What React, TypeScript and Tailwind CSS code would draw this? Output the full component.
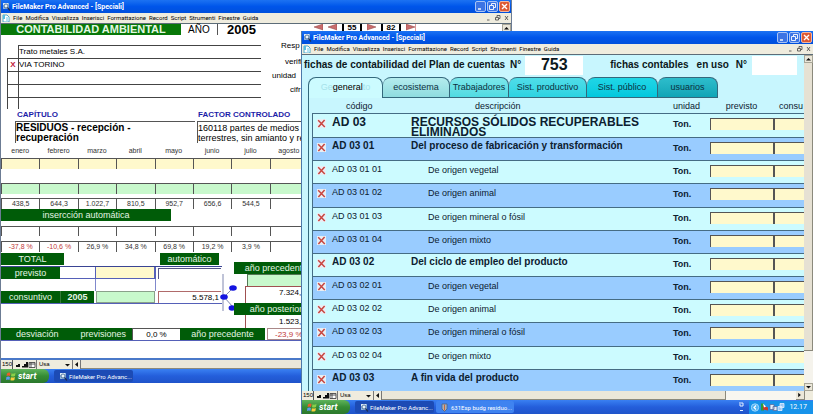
import clsx from 'clsx'

const MENU = ['File', 'Modifica', 'Visualizza', 'Inserisci', 'Formattazione', 'Record', 'Script', 'Strumenti', 'Finestre', 'Guida']

const MONTHS = [
  { name: 'enero', value: '438,5', change: '-37,8 %' },
  { name: 'febrero', value: '644,3', change: '-10,6 %' },
  { name: 'marzo', value: '1.022,7', change: '26,9 %' },
  { name: 'abril', value: '810,5', change: '34,8 %' },
  { name: 'mayo', value: '952,7', change: '69,8 %' },
  { name: 'junio', value: '656,6', change: '19,2 %' },
  { name: 'julio', value: '544,5', change: '3,9 %' },
  { name: 'agosto', value: '', change: '' },
]

type Level = 'title' | 'group' | 'item'

const ACCOUNTS: { code: string; text: string; level: Level }[] = [
  { code: 'AD 03', text: 'RECURSOS SÓLIDOS RECUPERABLES ELIMINADOS', level: 'title' },
  { code: 'AD 03 01', text: 'Del proceso de fabricación y transformación', level: 'group' },
  { code: 'AD 03 01 01', text: 'De origen vegetal', level: 'item' },
  { code: 'AD 03 01 02', text: 'De origen animal', level: 'item' },
  { code: 'AD 03 01 03', text: 'De origen mineral o fósil', level: 'item' },
  { code: 'AD 03 01 04', text: 'De origen mixto', level: 'item' },
  { code: 'AD 03 02', text: 'Del ciclo de empleo del producto', level: 'group' },
  { code: 'AD 03 02 01', text: 'De origen vegetal', level: 'item' },
  { code: 'AD 03 02 02', text: 'De origen animal', level: 'item' },
  { code: 'AD 03 02 03', text: 'De origen mineral o fósil', level: 'item' },
  { code: 'AD 03 02 04', text: 'De origen mixto', level: 'item' },
  { code: 'AD 03 03', text: 'A fin vida del producto', level: 'group' },
]

const TABS = [
  { label: 'ecosistema', className: 'w-[67px] from-[#b4ecee] to-[#8fdcdf]' },
  { label: 'Trabajadores', className: 'w-[59px] from-[#7be6ea] to-[#4fdbe2]' },
  { label: 'Sist. productivo', className: 'w-[78px] from-[#4fdde8] to-[#2bd3e2]' },
  { label: 'Sist. público', className: 'w-[71px] from-[#1fd6e6] to-[#00c8de]' },
  { label: 'usuarios', className: 'w-[60px] from-[#2dbdcc] to-[#0fa5b6]' },
]

function AppIcon() {
  return (
    <svg viewBox="0 0 9 9" className="size-[9px] shrink-0" aria-hidden="true">
      <rect x="1" y="1" width="6" height="6" fill="#8fb4dc" />
      <path d="M1 1h5v2H1z" fill="#d8e6f4" />
      <circle cx="4" cy="4" r="2" fill="#e9f2fa" stroke="#37608f" strokeWidth=".8" />
      <path d="M5.5 5.5 8 8.5" stroke="#1d2f55" strokeWidth="1.2" />
    </svg>
  )
}

function DocIcon() {
  return (
    <svg viewBox="0 0 8 8" className="size-2 shrink-0" aria-hidden="true">
      <path d="M1 1h4l2 2v5H1z" fill="#fff" stroke="#3aa0c8" strokeWidth=".9" />
      <path d="M1 1h2v4H1z" fill="#58bfe0" />
      <path d="M4 3h3v4H4z" fill="#b4e4f4" />
    </svg>
  )
}

function XMark() {
  return (
    <svg viewBox="0 0 9 9" className="size-[9px]" aria-hidden="true">
      <rect width="9" height="9" fill="#e8eef4" />
      <path d="M1.2 1.2 7.8 8M7.6 1 1.4 8" stroke="#c8453f" strokeWidth="1.5" />
    </svg>
  )
}

function TitleBar() {
  return (
    <div className="flex h-[13px] items-center bg-linear-to-b from-[#1c72f2] via-[#0055ea] to-[#0050dc] pr-px pl-px">
      <AppIcon />
      <h1 className="ml-px flex-1 font-['Roboto',sans-serif] text-[7px] leading-[12px] font-bold whitespace-nowrap text-white">
        FileMaker Pro Advanced - [Speciali]
      </h1>
      <div className="flex gap-px">
        <button aria-label="Riduci a icona" className="size-[11px] rounded-xs border border-[#a9c4f5] bg-[#3c74e4]">
          <svg viewBox="0 0 9 9" className="size-[9px]"><path d="M2 7h3" stroke="#fff" strokeWidth="1.4" /></svg>
        </button>
        <button aria-label="Ripristina" className="size-[11px] rounded-xs border border-[#a9c4f5] bg-[#3c74e4]">
          <svg viewBox="0 0 9 9" className="size-[9px]" fill="none" stroke="#fff" strokeWidth=".9"><path d="M3.5 3V1.5h4v4H6M1.5 3.5h4v4h-4z" /></svg>
        </button>
        <button aria-label="Chiudi" className="size-[11px] rounded-xs border border-[#f0b8a4] bg-[#dd5a34]">
          <svg viewBox="0 0 9 9" className="size-[9px]"><path d="M2 2l5 5M7 2 2 7" stroke="#fff" strokeWidth="1.4" /></svg>
        </button>
      </div>
    </div>
  )
}

function MenuBar() {
  return (
    <nav className="flex h-[11px] items-center border-b border-[#5c6c78] bg-[#efecde] pl-px">
      <DocIcon />
      <div className="ml-[3px] flex flex-1 gap-[3px] font-['Roboto',sans-serif] text-[6px] leading-[8px] text-black">
        {MENU.map((item) => (
          <button key={item}>{item}</button>
        ))}
      </div>
      <svg viewBox="0 0 24 8" className="mr-px h-2 w-6" fill="none" stroke="#444" strokeWidth=".8" aria-hidden="true">
        <path d="M1 6h2.500M11 3V1.500h3v3h-1M9.500 3.500h3v2.500h-3zM19 2l3 4M22 2l-3 4" />
      </svg>
    </nav>
  )
}

/** Zoom level, mode selector and horizontal scroll bar under a document. */
function StatusBar({ thumb }: { thumb: string }) {
  return (
    <div className="flex h-[9px] items-stretch bg-[#efecde] text-[6px] leading-[9px] text-black">
      <span className="w-[12px] border-r border-[#555] pl-px">150</span>
      <svg viewBox="0 0 23 9" className="w-[23px]" aria-hidden="true">
        <path d="M1 7h2V5h2V4h2v3zM9 7.500V6h2V4h2V2h2v5.500z" fill="#111" />
        <path d="M16 2.500h6v5h-6zM16 4h6M18 2.500v5" fill="#fff" stroke="#333" strokeWidth=".8" />
      </svg>
      <select aria-label="Modo" className="w-[28px] appearance-none border-l border-[#777] pl-[2px]">
        <option>Usa</option>
      </select>
      <svg viewBox="0 0 8 9" className="w-2" aria-hidden="true"><path d="M1 4h5L3.500 6.500z" fill="#111" /></svg>
      <button aria-label="Scorri a sinistra" className="w-[9px] border-x border-[#777]">
        <svg viewBox="0 0 7 9" className="h-[9px] w-[7px]"><path d="M5 2v5L2 4.500z" fill="#111" /></svg>
      </button>
      <div className="flex flex-1 bg-[#f7f6f0]">
        <div className={clsx('border-r border-b border-[#8b897c] bg-[#ebe7d9]', thumb)} />
      </div>
      <button aria-label="Scorri a destra" className="mr-[8px] w-[9px] border-r border-b border-[#8b897c] bg-[#ebe7d9]">
        <svg viewBox="0 0 7 9" className="h-[8px] w-[7px]"><path d="M2 2v5l3-2.500z" fill="#111" /></svg>
      </button>
    </div>
  )
}

function VerticalScroll() {
  return (
    <div className="flex w-[9px] flex-col bg-[#f5f3ec]">
      <button aria-label="Scorri in alto" className="h-[8px] border border-[#a8a698] bg-[#ebe7d9]">
        <svg viewBox="0 0 7 6" className="h-[6px] w-[7px]"><path d="M1 4.500h5L3.500 2z" fill="#111" /></svg>
      </button>
      <div className="flex-1">
        <div className="h-[90%] border-r border-b border-[#8b897c] bg-[#e6e1d3]" />
      </div>
      <button aria-label="Scorri in basso" className="h-[8px] border border-[#a8a698] bg-[#ebe7d9]">
        <svg viewBox="0 0 7 6" className="h-[6px] w-[7px]"><path d="M1 2h5L3.500 4.500z" fill="#111" /></svg>
      </button>
    </div>
  )
}

function StartButton() {
  return (
    <button className="flex w-[48px] items-center gap-[2px] rounded-r-md bg-linear-to-b from-[#5fb45c] via-[#358c35] to-[#2b782c] pl-[5px] text-[9px] leading-[13px] font-bold text-white italic">
      <svg viewBox="0 0 10 10" className="size-[10px]" aria-hidden="true">
        <path d="M1 2.500q2-1.500 3.500-.5L4 5Q2.500 4 .5 5z" fill="#ee5a2a" />
        <path d="M5.500 2.300Q7 3.200 9.500 2L9 5Q7 6 5 5.200z" fill="#8ad04a" />
        <path d="M.4 6Q2.400 5 3.900 6l-.4 3Q2 8 0 9z" fill="#5a9cf0" />
        <path d="M4.900 6.200Q7 7 8.900 6l-.5 3q-2 1-4 .2z" fill="#f8cc3c" />
      </svg>
      start
    </button>
  )
}

function TaskBar({ full }: { full?: boolean }) {
  return (
    <footer className="flex h-[14px] bg-linear-to-b from-[#3a80f2] via-[#245edb] to-[#1f54ca] font-['Roboto',sans-serif] text-[6px] whitespace-nowrap text-white">
      <StartButton />
      <button className="my-px ml-[5px] flex w-[79px] items-center gap-px rounded-xs bg-[#1c4bb5] pl-[5px]">
        <AppIcon />
        FileMaker Pro Advanc...
      </button>
      {full && (
        <>
          <button className="my-px ml-[2px] flex w-[78px] items-center gap-[3px] rounded-xs bg-[#3f83f0] pl-[5px]">
            <svg viewBox="0 0 7 9" className="h-[9px] w-[7px]" aria-hidden="true">
              <path d="M1 1h5v5L3.500 8.500 1 6z" fill="#a9b6c6" stroke="#4d5f7c" strokeWidth=".8" />
              <path d="M3.500 1.500v6" stroke="#c46a3c" strokeWidth="1.2" />
            </svg>
            631Esp budg residuo...
          </button>
          <div className="ml-auto flex items-center">
            <svg viewBox="0 0 8 12" className="mr-[4px] h-3 w-2" fill="none" stroke="#e4efff" strokeWidth="1" aria-hidden="true">
              <path d="M2 2h4v3H3v-2M3 9.500h3" />
            </svg>
            <div className="flex items-center gap-[4px] bg-[#1793ea] pr-[6px] pl-[2px] text-[7px]">
              <svg viewBox="0 0 34 12" className="h-[13px] w-[34px]" aria-hidden="true">
                <circle cx="4" cy="6" r="3.700" fill="#4db2f4" stroke="#b9e2ff" strokeWidth=".8" />
                <path d="M5 4 3 6l2 2" fill="none" stroke="#fff" strokeWidth="1.200" />
                <path d="M10 2h3v7h-3z" fill="#2c9c3c" />
                <path d="M12 4l5 2v3l-5-1z" fill="#c83a2c" />
                <path d="M12 2l3 3-2 1z" fill="#fff" />
                <path d="M19 3h4v5h-4zM22 5h4v4h-4z" fill="#e8eef8" stroke="#5a6ca0" strokeWidth=".8" />
                <path d="M29 2h4v4h-4zM27 5h4v4h-4z" fill="#9cc6f4" stroke="#e3f0ff" strokeWidth=".8" />
              </svg>
              <span>12.17</span>
            </div>
          </div>
        </>
      )}
    </footer>
  )
}

function MonthInputs({ kind, className }: { kind: string; className: string }) {
  return (
    <tr>
      {MONTHS.map((m) => (
        <td key={m.name} className="border-t border-l border-[#555] p-0">
          <input aria-label={`${kind} ${m.name}`} className={clsx('block h-[10px] w-full', className)} />
        </td>
      ))}
    </tr>
  )
}

function Spacer({ className }: { className: string }) {
  return (
    <tr aria-hidden="true">
      <td colSpan={8} className={clsx('p-0', className)} />
    </tr>
  )
}

const greenLabel = 'bg-[#005c08] text-center text-[9px] leading-[12px] whitespace-nowrap text-[#e4f6e4]'

function RecordNav() {
  return (
    <div className="ml-[58px] flex h-[7px] items-center gap-[5px] text-[8px] leading-[7px] font-bold text-black">
      {['Primero', 'Anterior'].map((label) => (
        <button key={label} aria-label={label}>
          <svg viewBox="0 0 9 7" className="h-[7px] w-[9px]"><path d="M9 0v6L0 3z" fill="#c96c6c" stroke="#8d4040" strokeWidth=".5" /></svg>
        </button>
      ))}
      <span className="w-5 border-x-2 border-black text-center">55</span>
      <button aria-label="Siguiente">
        <svg viewBox="0 0 9 7" className="h-[7px] w-[9px]"><path d="M0 0v6l9-3z" fill="#c96c6c" stroke="#8d4040" strokeWidth=".5" /></svg>
      </button>
      <span className="w-5 border-x-2 border-black text-center">82</span>
      <button aria-label="Último" className="border-r border-[#d99]">
        <svg viewBox="0 0 9 7" className="h-[7px] w-[9px]"><path d="M0 0v6l9-3z" fill="#c96c6c" stroke="#8d4040" strokeWidth=".5" /></svg>
      </button>
    </div>
  )
}

function AddressBlock() {
  const rows = ['Trato metales S.A.', 'VIA TORINO', '', '', '']
  return (
    <div className="mt-[10px] flex text-[8px] text-black">
      <div className="ml-[6px] w-[254px]">
        {rows.map((row, i) => (
          <div key={i} className={clsx('flex', i === 4 ? 'h-[12px]' : 'h-[13px]')}>
            <span
              className={clsx(
                'w-[11px] text-center leading-[12px] font-bold text-[#c0203a]',
                i > 0 && 'border-t border-l border-[#444]',
              )}
            >
              {i === 1 && 'X'}
            </span>
            <input
              aria-label={`Dirección ${i + 1}`}
              defaultValue={row}
              className="min-w-0 flex-1 border-t border-l border-[#444] leading-[12px]"
            />
          </div>
        ))}
      </div>
      <div className="-mt-[4px] pl-[11px] whitespace-nowrap">
        <p className="pl-[9px] leading-[10px]">Resp</p>
        <p className="mt-[6px] pl-[13px] leading-[10px]">verifi</p>
        <p className="mt-[4px] leading-[10px]">unidad</p>
        <p className="mt-[4px] pl-[18px] leading-[10px]">cifr</p>
      </div>
    </div>
  )
}

function MonthlyTable() {
  return (
    <table className="w-[307px] table-fixed border-separate border-spacing-0 text-center text-[7px] leading-[10px] text-[#333]">
      <thead>
        <tr>
          {MONTHS.map((m) => (
            <th key={m.name} className="h-[14px] p-0 align-middle font-normal">{m.name}</th>
          ))}
        </tr>
      </thead>
      <tbody>
        <MonthInputs kind="Previsto" className="bg-[#fff9cc]" />
        <Spacer className="h-[14px]" />
        <MonthInputs kind="Consuntivo" className="bg-[#c8f8cc]" />
        <Spacer className="h-[4px]" />
        <tr>
          {MONTHS.map((m) => (
            <td key={m.name} className="h-[11px] border-t border-l border-[#555] p-0">{m.value}</td>
          ))}
        </tr>
        <tr>
          <td colSpan={8} className="p-0">
            <div className={clsx(greenLabel, 'w-[170px]')}>insercción automática</div>
          </td>
        </tr>
        <Spacer className="h-[5px]" />
        <tr>
          {MONTHS.map((m) => (
            <td key={m.name} className="h-[10px] border-t border-l border-[#555] p-0" />
          ))}
        </tr>
        <Spacer className="h-[5px]" />
        <tr>
          {MONTHS.map((m) => (
            <td
              key={m.name}
              className={clsx('h-[10px] border-t border-l border-[#555] p-0', m.change.startsWith('-') && 'text-[#c23a3a]')}
            >
              {m.change}
            </td>
          ))}
        </tr>
      </tbody>
    </table>
  )
}

function Totals() {
  return (
    <div className="mt-px flex text-black">
      <div className="w-[221px]">
        <div className="flex justify-between">
          <div className={clsx(greenLabel, 'h-[12px] w-[63px]')}>TOTAL</div>
          <div className={clsx(greenLabel, 'mr-[3px] h-[12px] w-[59px]')}>automático</div>
        </div>
        <div className="mt-px flex h-[13px] border-t border-[#3a4494]">
          <label htmlFor="previsto" className={clsx(greenLabel, 'w-[59px]')}>previsto</label>
          <div className="w-[35px] border-b border-[#5560b8]" />
          <input id="previsto" className="w-[61px] border-r-2 border-b border-l border-[#5560b8] bg-[#fff9cc]" />
          <input aria-label="previsto automático" className="mt-px ml-[2px] w-[63px] border-t border-l border-[#555588]" />
        </div>
        <div className="flex h-[12px]">
          <div className="ml-[94px] w-[61px] border-x border-[#8088cc]" />
        </div>
        <div className="flex h-[13px] border-b border-[#5560b8]">
          <label htmlFor="consuntivo" className={clsx(greenLabel, 'w-[59px]')}>consuntivo</label>
          <div className={clsx(greenLabel, 'w-[34px] border-l border-[#337a38] font-bold')}>2005</div>
          <input id="consuntivo" className="mx-[2px] w-[59px] border border-[#8aa08a] bg-[#c8f8cc]" />
          <input
            aria-label="consuntivo automático"
            defaultValue="5.578,1"
            className="ml-px w-[63px] border-t border-l border-[#b06a6a] pr-[2px] text-right text-[8px]"
          />
        </div>
      </div>
      <svg viewBox="0 0 12 60" className="h-[60px] w-[12px] overflow-visible" aria-hidden="true">
        <path d="M1 21v37M11 35 2 44l9 10" fill="none" stroke="#8088b0" strokeWidth="1" />
        <ellipse cx="11" cy="35" rx="3.800" ry="2.800" fill="#1414e0" />
        <ellipse cx="2" cy="44" rx="3.800" ry="2.800" fill="#1414e0" />
        <ellipse cx="10" cy="55" rx="3.400" ry="2.800" fill="#1414e0" />
      </svg>
      <div className="mt-[9px] w-[84px] text-[8px]">
        <div className={clsx(greenLabel, 'h-[12px]')}>año precedente</div>
        <input aria-label="previsto año precedente" className="ml-[13px] block h-[12px] w-[71px] border-t border-l border-[#557755] bg-[#c8f8cc]" />
        <div className="ml-[11px] h-[17px] border-t border-l border-[#a05050] pl-[33px] leading-[12px]">7.324,</div>
        <div className={clsx(greenLabel, 'h-[12px]')}>año posterior</div>
        <div className="ml-[11px] h-[13px] border-l border-[#a05050] pl-[33px] leading-[13px]">1.523,</div>
      </div>
    </div>
  )
}

function AccountingWindow() {
  return (
    <section className="absolute top-0 left-0 w-[512px] border-x border-[#6c7c94] bg-white">
      <TitleBar />
      <MenuBar />
      <div className="flex">
        <div className="min-w-0 flex-1">
          <div className="flex h-[11px]">
            <h2 className="w-[180px] bg-[#087808] text-center text-[11px] leading-[11px] font-bold whitespace-nowrap text-[#e4f8e4]">
              CONTABILIDAD AMBIENTAL
            </h2>
            <span className="w-[37px] border-r border-[#555] pl-[7px] text-[10px] leading-[11px] text-black">AÑO</span>
            <span className="pl-[9px] text-[13px] leading-[11px] font-bold text-black">2005</span>
            <RecordNav />
          </div>
          <AddressBlock />
          <div className="mt-px mb-px flex text-[8px] leading-[10px] font-bold text-[#1c1ca8]">
            <label htmlFor="capitulo" className="w-[197px] pl-[16px]">CAPÍTULO</label>
            <label htmlFor="factor">FACTOR CONTROLADO</label>
          </div>
          <div className="mb-px flex text-black">
            <textarea
              id="capitulo"
              defaultValue="RESIDUOS - recepción - recuperación"
              className="ml-[14px] h-[22px] w-[180px] resize-none overflow-hidden border-t border-l border-[#555] pt-px pr-[40px] text-[10px] leading-[10px] font-bold"
            />
            <textarea
              id="factor"
              defaultValue="160118 partes de medios terrestres, sin amianto y re"
              className="ml-[2px] h-[22px] w-[116px] resize-none overflow-hidden border-t border-l border-[#555] pt-px text-[9px] leading-[10px]"
            />
          </div>
          <MonthlyTable />
          <Totals />
          <div className="flex h-[13px] w-[307px] border-b border-[#5560b8]">
            <div className={clsx(greenLabel, 'flex w-[131px] justify-between pr-[6px] pl-[15px]')}>
              <span>desviación</span>
              <span>previsiones</span>
            </div>
            <div className="w-[48px] border-t border-l border-[#555] text-center text-[8px] leading-[12px] text-black">0,0 %</div>
            <div className={clsx(greenLabel, 'w-[85px]')}>año precedente</div>
            <div className="ml-[2px] flex-1 border border-[#a88] pl-[7px] text-[8px] leading-[11px] text-[#c23a3a]">-23,9 %</div>
          </div>
          <div className="mt-[17px] border-t-2 border-[#4a78c8]" />
        </div>
        <VerticalScroll />
      </div>
      <StatusBar thumb="w-3/4" />
      <TaskBar />
    </section>
  )
}

function PlanHeader() {
  return (
    <header className="flex h-[20px] items-center text-[10px] leading-[20px] font-bold whitespace-nowrap text-[#0c1820]">
      <h2 className="w-[208px] pl-[2px]">fichas de contabilidad del Plan de cuentas</h2>
      <label htmlFor="fichas">N°</label>
      <input id="fichas" defaultValue="753" className="ml-[4px] h-[19px] w-[58px] bg-white text-center text-[16px] font-bold" />
      <span className="ml-[27px]">fichas contables</span>
      <span className="ml-[8px]">en uso</span>
      <label htmlFor="enuso" className="ml-auto">N°</label>
      <input id="enuso" className="mr-[7px] ml-[5px] h-[19px] w-[45px] bg-white" />
    </header>
  )
}

function AccountTable() {
  return (
    <table className="h-[294px] w-full table-fixed border-separate border-spacing-0 text-left text-[9px] leading-[10px] text-[#0c2030]">
      <colgroup>
        <col className="w-[20px]" />
        <col className="w-[79px]" />
        <col />
        <col className="w-[37px]" />
        <col className="w-[63px]" />
        <col className="w-[31px]" />
      </colgroup>
      <thead>
        <tr className="h-[15px]">
          <th className="p-0" />
          <th className="p-0 pl-[14px] font-normal">código</th>
          <th className="p-0 pl-[64px] font-normal">descripción</th>
          <th className="p-0 font-normal">unidad</th>
          <th className="p-0 text-center font-normal">previsto</th>
          <th className="p-0 pl-[6px] font-normal">consu</th>
        </tr>
      </thead>
      <tbody>
        {ACCOUNTS.map(({ code, text, level }, i) => {
          const cell = 'border-t border-[#456c84] p-0 align-top'
          const size = level === 'title' ? 'text-[12px] font-bold' : level === 'group' ? 'text-[10px] font-bold' : ''
          return (
            <tr key={code} className={clsx('h-[23px]', i % 2 ? 'bg-[#99ccff]' : 'bg-[#ccfbff]')}>
              <td className={clsx(cell, 'border-l pt-[5px] pl-[4px]')}>
                <button aria-label={`Eliminar ${code}`} className="block"><XMark /></button>
              </td>
              <td className={clsx(cell, size, 'pt-[3px]')}>{code}</td>
              <td className={clsx(cell, size, level === 'item' ? 'pt-[4px] pl-[17px]' : 'pt-[3px]')}>
                <div className="max-w-[232px]">{text}</div>
              </td>
              <td className={clsx(cell, 'pt-[5px] font-bold')}>Ton.</td>
              <td className={clsx(cell, 'pt-[4px]')}>
                <input aria-label={`Previsto ${code}`} className="block h-[12px] w-full border-t border-l border-[#555] bg-[#fff9cc]" />
              </td>
              <td className={clsx(cell, 'pt-[4px]')}>
                <input aria-label={`Consuntivo ${code}`} className="block h-[12px] w-full border-t border-l-2 border-[#555] bg-[#fff9cc]" />
              </td>
            </tr>
          )
        })}
      </tbody>
    </table>
  )
}

function PlanWindow() {
  return (
    <section className="absolute top-[31px] right-[3px] left-[301px] border-l border-[#4c78a8] bg-[#c8f6fe]">
      <TitleBar />
      <MenuBar />
      <div className="flex">
        <div className="h-[336px] min-w-0 flex-1 overflow-hidden">
          <PlanHeader />
          <div role="tablist" className="mt-[2px] ml-[6px] flex h-[21px] text-[9px] text-[#0c3040]">
            <button
              role="tab"
              aria-selected="true"
              className="w-[75px] rounded-t-lg border-x border-t border-[#34687c] bg-[#ccfbff] text-black"
            >
              <span className="text-[#a6e2ea]" aria-hidden="true">Ge</span>
              general
              <span className="text-[#a6e2ea]" aria-hidden="true">to</span>
            </button>
            {TABS.map((tab) => (
              <button
                key={tab.label}
                role="tab"
                aria-selected="false"
                className={clsx('rounded-t-lg border-t border-r border-b border-[#34687c] bg-linear-to-b whitespace-nowrap', tab.className)}
              >
                {tab.label}
              </button>
            ))}
          </div>
          <div className="ml-[6px] border-l border-[#34687c] pl-[3px]">
            <AccountTable />
          </div>
        </div>
        <VerticalScroll />
      </div>
      <StatusBar thumb="w-[83%]" />
      <TaskBar full />
    </section>
  )
}

export default function App() {
  return (
    <main className="relative min-h-screen overflow-hidden bg-white font-['Liberation_Sans',Arial,sans-serif]">
      <AccountingWindow />
      <PlanWindow />
    </main>
  )
}
